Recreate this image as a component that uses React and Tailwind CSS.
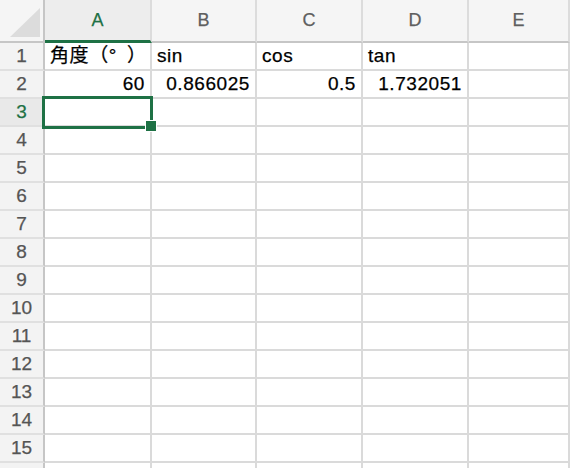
import React from 'react';

const columns = [
  { key: 'A', w: 'w-[107px]' },
  { key: 'B', w: 'w-[105px]' },
  { key: 'C', w: 'w-[106px]' },
  { key: 'D', w: 'w-[106px]' },
  { key: 'E', w: 'flex-1' },
];

const data = {
  1: ['角度（°\u2002）', 'sin', 'cos', 'tan', ''],
  2: ['60', '0.866025', '0.5', '1.732051', ''],
};

const isNumber = (v) => v !== '' && !isNaN(Number(v));

const App = () => {
  // 16th row only peeks in at the bottom edge
  const rows = Array.from({ length: 16 }, (_, i) => i + 1);

  return (
    <div className="h-[468px] w-[570px] overflow-hidden bg-white font-['Liberation_Sans','Noto_Sans_CJK_JP',sans-serif] [-webkit-text-stroke:0.25px]">
      {/* column headers */}
      <div className="flex h-[43px] bg-[#f5f5f5]">
        <div className="relative w-[45px] shrink-0 border-r-2 border-b-2 border-[#c6c6c6]">
          <svg className="absolute left-[10px] top-[8px]" width="30" height="29" viewBox="0 0 30 29">
            <polygon points="30,0 30,29 0,29" fill="#dcdcdc" />
          </svg>
        </div>
        {columns.map((c) => (
          <div
            key={c.key}
            className={`${c.w} shrink-0 flex items-center justify-center border-r-2 border-r-[#dcdcdc] text-[18px] ${
              c.key === 'A'
                ? 'border-b-[3px] border-b-[#1e7145] bg-[#ededed] text-[#1e7145]'
                : 'border-b-2 border-b-[#c6c6c6] text-[#5f5f5f]'
            }`}
          >
            {c.key}
          </div>
        ))}
      </div>

      {/* rows */}
      {rows.map((r) => (
        <div key={r} className="flex h-[28px]">
          <div
            className={`w-[45px] shrink-0 flex items-center justify-center border-r-2 border-r-[#c6c6c6] border-b-2 border-b-[#e0e0e0] text-[19px] ${
              r === 3 ? 'bg-[#e9e9e9] text-[#1e7145]' : 'bg-[#f3f3f3] text-[#555555]'
            }`}
          >
            {r < 16 ? r : ''}
          </div>
          {columns.map((c, i) => {
            const v = (data[r] && data[r][i]) || '';
            const selected = r === 3 && c.key === 'A';
            return (
              <div
                key={c.key}
                className={`${c.w} shrink-0 flex items-center px-[5px] border-r-2 border-b-2 border-[#dadada] text-[19px] text-black tracking-[0.03em] whitespace-nowrap ${
                  isNumber(v) ? 'justify-end' : 'justify-start'
                } ${selected ? 'relative z-10' : ''}`}
              >
                {v}
                {selected && (
                  <>
                    <div className="absolute -left-[3px] -top-[3px] h-[33px] w-[111px] border-[3px] border-[#1e7145]" />
                    <div className="absolute left-[100px] top-[21px] h-[12px] w-[12px] border border-white bg-[#1e7145]" />
                  </>
                )}
              </div>
            );
          })}
        </div>
      ))}
    </div>
  );
};

export default App;
